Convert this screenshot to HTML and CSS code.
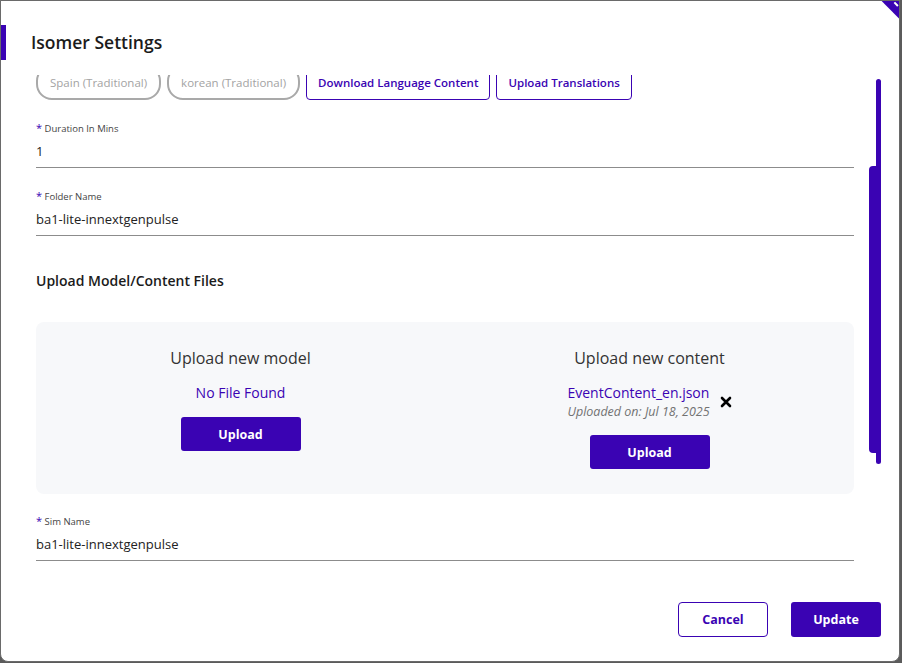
FILE: index.html
```html
<!DOCTYPE html>
<html lang="en">
  <head>
    <meta charset="UTF-8" />
    <meta name="viewport" content="width=device-width, initial-scale=1.0" />
    <title>Isomer Settings</title>
    <link rel="stylesheet" href="styles.css">
  </head>
  <body>
    <div class="modal">
      <span class="close-corner"></span>
      <div class="modal-header">
        <span class="accent"></span>
        <h1>Isomer Settings</h1>
      </div>

      <div class="modal-body">
        <div class="scroll-content">
          <div class="lang-row">
            <span class="chip">Spain (Traditional)</span>
            <span class="chip">korean (Traditional)</span>
            <button class="outline-btn">Download Language Content</button>
            <button class="outline-btn">Upload Translations</button>
          </div>

          <div class="field">
            <label><span class="req">*</span> Duration In Mins</label>
            <div class="value">1</div>
          </div>

          <div class="field">
            <label><span class="req">*</span> Folder Name</label>
            <div class="value">ba1-lite-innextgenpulse</div>
          </div>

          <h2>Upload Model/Content Files</h2>

          <div class="upload-panel">
            <div class="upload-col">
              <h3>Upload new model</h3>
              <p class="file-name">No File Found</p>
              <button class="fill-btn">Upload</button>
            </div>
            <div class="upload-col">
              <h3>Upload new content</h3>
              <div class="file-row">
                <div class="file-info">
                  <p class="file-name">EventContent_en.json</p>
                  <p class="file-date">Uploaded on: Jul 18, 2025</p>
                </div>
                <svg class="remove" width="12" height="12" viewBox="0 0 12 12">
                  <path d="M2 2 L10 10 M10 2 L2 10" stroke="#000" stroke-width="2.6" stroke-linecap="round" />
                </svg>
              </div>
              <button class="fill-btn">Upload</button>
            </div>
          </div>

          <div class="field">
            <label><span class="req">*</span> Sim Name</label>
            <div class="value">ba1-lite-innextgenpulse</div>
          </div>
        </div>

        <div class="scrollbar">
          <div class="track"></div>
          <div class="thumb"></div>
        </div>
      </div>

      <div class="modal-footer">
        <button class="outline-btn footer-btn">Cancel</button>
        <button class="fill-btn footer-btn">Update</button>
      </div>
    </div>
  </body>
</html>
```

FILE: styles.css
```css
body {
  font-family: "Open Sans", "Noto Sans", sans-serif;
  background-color: #5b5b5b;
  margin: 0;
  padding: 0;
}
.modal {
  position: relative;
  box-sizing: border-box;
  width: 900px;
  height: 662px;
  background-color: #fff;
  border: 1px solid #6a6a6a;
  border-radius: 0 0 8px 8px;
  overflow: hidden;
  display: flex;
  flex-direction: column;
}
.close-corner {
  position: absolute;
  top: -13px;
  right: -14px;
  width: 26px;
  height: 26px;
  background-color: #3a03b3;
  transform: rotate(45deg);
}
.close-corner::after {
  content: "";
  position: absolute;
  left: 10px;
  top: 17px;
  width: 5px;
  height: 2px;
  background-color: #fff;
}
.modal-header {
  height: 74px;
  flex-shrink: 0;
  display: flex;
  align-items: flex-start;
}
.accent {
  width: 5px;
  height: 35px;
  margin-top: 24px;
  background-color: #3a03b3;
}
.modal-header h1 {
  margin: 0;
  margin-top: 28px;
  margin-left: 25px;
  font-size: 17.5px;
  line-height: 26px;
  font-weight: 600;
  color: #1b1b1b;
}
/* the first rows are scrolled out of view */
.modal-body {
  flex: 1;
  min-height: 0;
  display: flex;
  overflow: hidden;
}
.scroll-content {
  width: 818px;
  margin-left: 35px;
  margin-top: -10px;
}
.lang-row {
  display: flex;
  gap: 6px;
  margin-bottom: 21px;
}
.chip {
  display: inline-flex;
  align-items: center;
  height: 35px;
  box-sizing: border-box;
  padding: 0 12px;
  border: 2px solid #a9a9a9;
  border-radius: 16px;
  color: #a3a3a3;
  font-size: 11.5px;
}
.outline-btn {
  font-family: inherit;
  height: 35px;
  padding: 0 11px;
  background-color: #fff;
  border: 1px solid #3a03b3;
  border-radius: 4px;
  color: #3a03b3;
  font-size: 11.5px;
  font-weight: 600;
}
.field {
  border-bottom: 1px solid #8c8c8c;
  padding-bottom: 6px;
  margin-bottom: 21px;
}
.field label {
  display: block;
  font-size: 9.5px;
  line-height: 14px;
  color: #444;
}
.req {
  color: #3a03b3;
  font-size: 11px;
}
.value {
  margin-top: 5px;
  font-size: 13px;
  line-height: 20px;
  color: #222;
}
h2 {
  margin: 35px 0 31px;
  font-size: 14px;
  line-height: 20px;
  font-weight: 600;
  color: #1b1b1b;
}
.upload-panel {
  display: grid;
  grid-template-columns: 1fr 1fr;
  align-items: start;
  background-color: #f7f8fa;
  border-radius: 8px;
  padding: 25px 0 25px;
  margin-bottom: 20px;
}
.upload-col {
  display: flex;
  flex-direction: column;
  align-items: center;
}
.upload-col h3 {
  margin: 0 0 14px;
  font-size: 16px;
  line-height: 22px;
  font-weight: 500;
  color: #333;
}
.file-name {
  margin: 0;
  font-size: 14px;
  line-height: 20px;
  color: #3a03b3;
}
.upload-col > .file-name {
  margin-bottom: 14px;
}
.file-row {
  display: flex;
  align-items: center;
  gap: 10px;
  margin-bottom: 15px;
}
.file-date {
  margin: 0;
  font-size: 12.5px;
  line-height: 17px;
  font-style: italic;
  color: #727272;
}
.fill-btn {
  font-family: inherit;
  width: 120px;
  height: 34px;
  background-color: #3a03b3;
  border: none;
  border-radius: 3px;
  color: #fff;
  font-size: 12.5px;
  font-weight: 700;
}
.scrollbar {
  position: relative;
  width: 12px;
  margin-left: 15px;
  margin-top: 4px;
  display: flex;
  justify-content: flex-end;
}
.track {
  width: 5px;
  height: 385px;
  border-radius: 3px;
  background-color: #3a03b3;
}
.thumb {
  position: absolute;
  left: 0;
  top: 87px;
  width: 11px;
  height: 287px;
  border-radius: 4px;
  background-color: #3a03b3;
}
.modal-footer {
  flex-shrink: 0;
  display: flex;
  justify-content: flex-end;
  gap: 23px;
  padding: 26px 18px 24px;
}
.footer-btn {
  width: 90px;
  height: 35px;
  padding: 0;
  font-size: 12.5px;
  font-weight: 700;
}
```
